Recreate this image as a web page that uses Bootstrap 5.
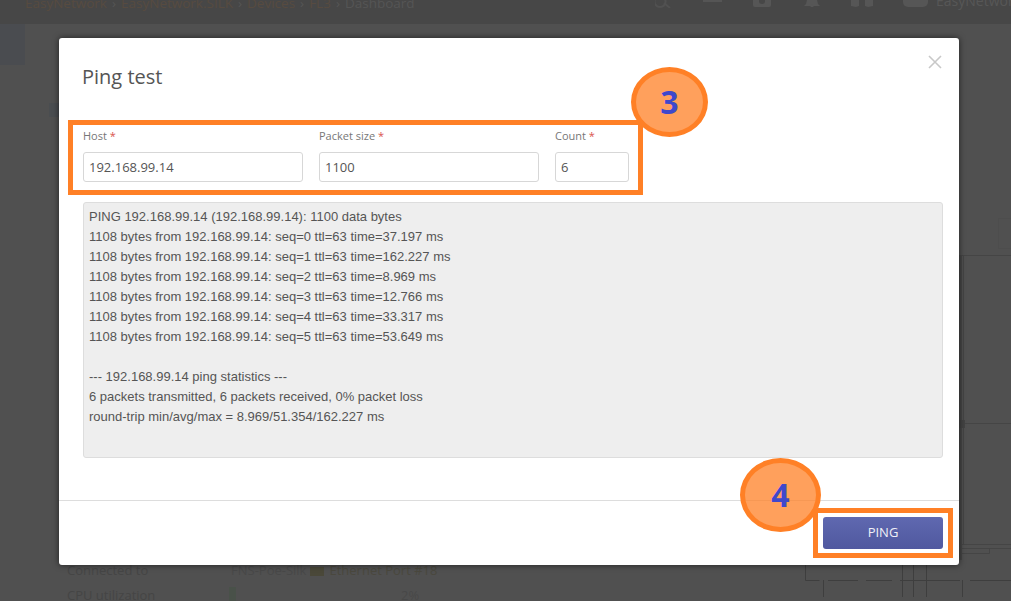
<!DOCTYPE html>
<html lang="en">
<head>
<meta charset="utf-8">
<title>Ping test</title>
<link href="https://cdn.jsdelivr.net/npm/bootstrap@5.3.0/dist/css/bootstrap.min.css" rel="stylesheet">
<style>
html,body{height:601px;overflow:hidden}
body{background:#505050;font-family:"Open Sans",sans-serif;color:#555;position:relative}
.bar-top{height:24px;background:#474747;overflow:hidden;color:#555;font-size:13.5px;padding-left:25px}
.crumb{margin-top:-7px;line-height:20px;white-space:nowrap;gap:4px}
.crumb a{color:#574b40;text-decoration:none}
.crumb-sep{margin:0 1px}
.bar-icons{width:356px;flex-shrink:0;height:24px;overflow:hidden}
.bar-icons svg{display:block;flex-shrink:0}
.bar-name{margin:-9px 0 0 8px;line-height:20px;white-space:nowrap;color:#575757;font-size:14px}
.side-tab{width:25px;height:41px;background:#4a4c50}
.side-chip{position:absolute;left:49px;top:103px;width:10px;height:14px;background:#4a4d50}
.page-lines{position:absolute;left:959px;top:210px;width:52px;height:350px}
.page-lines-low{position:absolute;left:800px;top:565px;width:211px;height:36px}
.stats{position:absolute;left:67px;top:558px;font-size:13px;color:#454545;line-height:25px}
.stats-key{width:164px}
.stats-key-bar{width:162px}
.stats-bar{width:7px;height:14px;background:#495149;margin-top:4px}
.stats-val{color:#484848}
.stats-2pct{margin-left:165px}
.stats-port{color:#4a483e}
.stats-ico{width:14px;height:9px;background:#4a4839;margin:9px 5px 0 4px}
.sheet{position:absolute;left:59px;top:38px;width:900px;height:527px;background:#fff;border-radius:3px;box-shadow:0 0 6px rgba(0,0,0,.6);display:flex;flex-direction:column}
.sheet-head{height:79px;padding:26px 23px 0;position:relative}
.sheet-title{font-size:20px;line-height:26px;color:#555;font-weight:400;margin:0}
.sheet-x{position:absolute;right:16px;top:16px;display:block}
.sheet-body{flex:1;padding:0 16px 0 24px}
.field-label{font-size:11px;line-height:16px;color:#777;margin-bottom:8px;display:block}
.field-label b{color:#d9534f;font-weight:400}
.field-input{height:30px;border:1px solid #d7d7d7;border-radius:3px;padding:0 5px;font-size:13px;color:#555;font-family:"Open Sans",sans-serif;box-shadow:none}
.f-host{width:220px}.f-size{width:220px}.f-count{width:74px}
.fields{gap:16px;padding-top:11px;margin-bottom:20px}
.ping-out{height:256px;background:#eee;border:1px solid #ddd;border-radius:3px;margin:0;padding:4px 5px;font:13px/20px "Liberation Sans",Arial,sans-serif;color:#555;white-space:pre;overflow:hidden}
.sheet-foot{height:65px;border-top:1px solid #ddd;padding:16px 16px 0 0}
.btn-ping{width:120px;height:32px;padding:0;border:0;border-radius:3px;background:linear-gradient(#5f68b0,#50589f);color:#f0f0f7;font-size:13px;font-weight:400}
.btn-ping:hover{background:#50589f;color:#fff}
.hl-box{position:absolute;border:5px solid #ff8026;pointer-events:none}
.hl-fields{left:68px;top:120px;width:575px;height:75px}
.hl-ping{left:813px;top:508px;width:140px;height:50px}
.step{position:absolute;border-radius:50%;border:5px solid #ff8026;background:rgba(255,128,38,.75);color:#3f48cc;font-weight:700;font-family:"Noto Sans","Open Sans",sans-serif;display:flex;align-items:center;justify-content:center;font-size:32px;line-height:1}
.step-3{left:631px;top:67px;width:77px;height:70px}
.step-4{left:740px;top:458px;width:81px;height:74px}
</style>
</head>
<body>
<div class="bar-top d-flex justify-content-between">
  <div class="crumb d-flex"><a href="#">EasyNetwork</a><span class="crumb-sep">&rsaquo;</span><a href="#">EasyNetwork.SILK</a><span class="crumb-sep">&rsaquo;</span><a href="#">Devices</a><span class="crumb-sep">&rsaquo;</span><a href="#">FL3</a><span class="crumb-sep">&rsaquo;</span><span>Dashboard</span></div>
  <div class="bar-icons d-flex align-items-start">
    <svg width="16" height="8" viewBox="0 0 16 8"><path d="M5 -4a5.500 5.500 0 1 0 .01 0M9 3l6 5" fill="none" stroke="#515151" stroke-width="2"/></svg>
    <svg width="19" height="3" viewBox="0 0 19 3" style="margin-left:32px"><path d="M0 1h19" stroke="#555" stroke-width="2"/></svg>
    <svg width="18" height="7" viewBox="0 0 18 7" style="margin-left:31px"><path d="M0 0h18v5a2 2 0 0 1-2 2H2a2 2 0 0 1-2-2z" fill="#565656"/><circle cx="9" cy="1" r="3" fill="#474747"/></svg>
    <svg width="16" height="7" viewBox="0 0 16 7" style="margin-left:33px"><path d="M3 0h10l1 4 2 2H0l2-2z" fill="#565656"/><circle cx="8" cy="6" r="1.500" fill="#565656"/></svg>
    <svg width="22" height="7" viewBox="0 0 22 7" style="margin-left:31px"><path d="M0 0h8v6l-3 1-5-1zM14 0h8v6l-5 1-3-1z" fill="#565656"/></svg>
    <svg width="25" height="8" viewBox="0 0 25 8" style="margin-left:30px"><path d="M0 0h25v2a5 5 0 0 1-5 5H5a5 5 0 0 1-5-5z" fill="#565656"/></svg>
    <span class="bar-name">EasyNetwork</span>
  </div>
</div>
<div class="side-tab"></div>
<div class="side-chip"></div>

<svg class="page-lines" viewBox="0 0 52 350" aria-hidden="true">
  <path d="M39.500 8.500h13M39.500 8.500v30h13" fill="none" stroke="#4d4d4d"/>
  <g fill="none" stroke="#454545" stroke-width="1">
    <path d="M0 45.500h52M0 213.500h52M4.500 45v290M0 334.500h52M0 338.500h52M0 343.500h30.500v-5"/>
  </g>
  <rect x="0" y="45" width="3" height="305" fill="#464646"/>
  <rect x="0" y="210" width="6" height="8" fill="#434343"/>
</svg>
<svg class="page-lines-low" viewBox="0 0 211 36" aria-hidden="true">
  <path d="M5.500 0v15.500h14M28 15.500h30M66 15.500h26M100 15.500h60M170 15.500h41M23.500 15v17M102.500 0v32M113.500 0v32M126.500 0v32M162.500 15v17" fill="none" stroke="#3e3e3e"/>
</svg>
<div class="stats">
  <div class="d-flex"><div class="stats-key">Connected to</div><div class="stats-val">FNS-Poe-Silk</div><div class="stats-ico"></div><div class="stats-port">Ethernet Port #18</div></div>
  <div class="d-flex"><div class="stats-key stats-key-bar">CPU utilization</div><div class="stats-bar"></div><div class="stats-val stats-2pct">2%</div></div>
</div>

<div class="sheet">
  <div class="sheet-head">
    <h5 class="sheet-title">Ping test</h5>
    <svg class="sheet-x" width="16" height="16" viewBox="0 0 16 16" aria-label="Close"><path d="M2 2l12 12M14 2L2 14" stroke="#c8c8c8" stroke-width="1.600"/></svg>
  </div>
  <div class="sheet-body">
    <form class="fields d-flex">
      <div><label class="field-label">Host <b>*</b></label><input class="form-control field-input f-host" value="192.168.99.14"></div>
      <div><label class="field-label">Packet size <b>*</b></label><input class="form-control field-input f-size" value="1100"></div>
      <div><label class="field-label">Count <b>*</b></label><input class="form-control field-input f-count" value="6"></div>
    </form>
    <pre class="ping-out">PING 192.168.99.14 (192.168.99.14): 1100 data bytes
1108 bytes from 192.168.99.14: seq=0 ttl=63 time=37.197 ms
1108 bytes from 192.168.99.14: seq=1 ttl=63 time=162.227 ms
1108 bytes from 192.168.99.14: seq=2 ttl=63 time=8.969 ms
1108 bytes from 192.168.99.14: seq=3 ttl=63 time=12.766 ms
1108 bytes from 192.168.99.14: seq=4 ttl=63 time=33.317 ms
1108 bytes from 192.168.99.14: seq=5 ttl=63 time=53.649 ms

--- 192.168.99.14 ping statistics ---
6 packets transmitted, 6 packets received, 0% packet loss
round-trip min/avg/max = 8.969/51.354/162.227 ms</pre>
  </div>
  <div class="sheet-foot d-flex justify-content-end">
    <button type="button" class="btn btn-primary btn-ping">PING</button>
  </div>
</div>

<div class="hl-box hl-fields"></div>
<div class="hl-box hl-ping"></div>
<div class="step step-3">3</div>
<div class="step step-4">4</div>
<script src="https://cdn.jsdelivr.net/npm/bootstrap@5.3.0/dist/js/bootstrap.bundle.min.js"></script>
</body>
</html>
